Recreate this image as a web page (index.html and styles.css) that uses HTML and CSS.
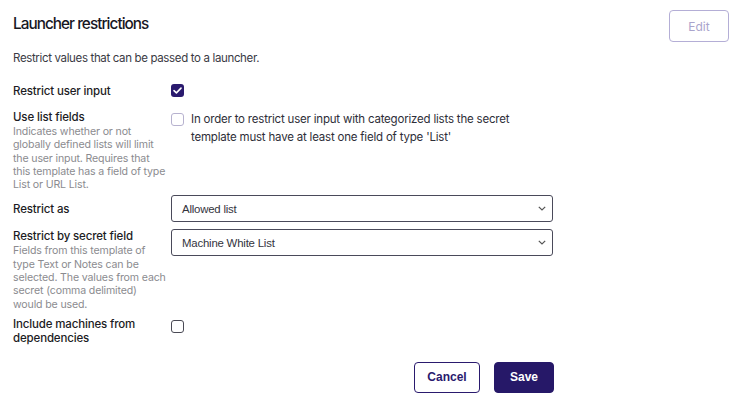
FILE: index.html
```html
<!DOCTYPE html>
<html lang="en">
<head>
<meta charset="utf-8">
<title>Launcher restrictions</title>
<link rel="stylesheet" href="styles.css">
</head>
<body>
<div class="page">
  <div class="header">
    <h1 class="title">Launcher restrictions</h1>
    <button class="btn btn-edit" type="button">Edit</button>
  </div>
  <p class="desc">Restrict values that can be passed to a launcher.</p>

  <div class="form">
    <div class="row row-user">
      <div class="label-col"><div class="label">Restrict user input</div></div>
      <div class="control-col">
        <span class="cb cb-checked">
          <svg viewBox="0 0 14 14" width="13" height="13"><path d="M3.2 7.2 L5.8 9.6 L10.8 4.4" fill="none" stroke="#fff" stroke-width="1.7" stroke-linecap="round" stroke-linejoin="round"/></svg>
        </span>
      </div>
    </div>

    <div class="row row-list">
      <div class="label-col">
        <div class="label">Use list fields</div>
        <div class="help">Indicates whether or not<br>globally defined lists will limit<br>the user input. Requires that<br>this template has a field of type<br>List or URL List.</div>
      </div>
      <div class="control-col inline">
        <span class="cb cb-disabled"></span>
        <span class="note">In order to restrict user input with categorized lists the secret template must have at least one field of type 'List'</span>
      </div>
    </div>

    <div class="row row-as">
      <div class="label-col"><div class="label">Restrict as</div></div>
      <div class="control-col">
        <div class="select"><span>Allowed list</span><svg class="chev" viewBox="0 0 8 5" width="8" height="5"><path d="M0.8 0.8 L4 4 L7.2 0.8" fill="none" stroke="#555" stroke-width="1.2"/></svg></div>
      </div>
    </div>

    <div class="row row-field">
      <div class="label-col">
        <div class="label">Restrict by secret field</div>
        <div class="help">Fields from this template of<br>type Text or Notes can be<br>selected. The values from each<br>secret (comma delimited)<br>would be used.</div>
      </div>
      <div class="control-col">
        <div class="select"><span>Machine White List</span><svg class="chev" viewBox="0 0 8 5" width="8" height="5"><path d="M0.8 0.8 L4 4 L7.2 0.8" fill="none" stroke="#555" stroke-width="1.2"/></svg></div>
      </div>
    </div>

    <div class="row row-deps">
      <div class="label-col"><div class="label label-wrap">Include machines from dependencies</div></div>
      <div class="control-col">
        <span class="cb cb-empty"></span>
      </div>
    </div>

    <div class="footer">
      <button class="btn btn-cancel" type="button">Cancel</button>
      <button class="btn btn-save" type="button">Save</button>
    </div>
  </div>
</div>
</body>
</html>
```
FILE: styles.css
```css
* { box-sizing: border-box; }
html, body { margin: 0; padding: 0; background: #fff; }
body {
  font-family: Inter, "Noto Sans", "DejaVu Sans", sans-serif;
  color: #2a2a33;
  width: 741px;
  height: 403px;
  overflow: hidden;
}
.page { padding: 10px 12px 0 13px; }

.header {
  display: flex;
  justify-content: space-between;
  align-items: flex-start;
  height: 32px;
}
.title {
  margin: 0;
  padding-top: 4px;
  font-size: 15.3px;
  font-weight: 500;
  color: #17171f;
  line-height: 20px;
  letter-spacing: -0.95px;
}
.btn {
  font-family: "Liberation Sans", Arial, sans-serif;
  border-radius: 4px;
  height: 31px;
  cursor: pointer;
}
.btn-edit {
  width: 60px;
  height: 32px;
  background: #fff;
  border: 1px solid #b4aed6;
  color: #aaa4cc;
  font-family: Inter, sans-serif;
  font-size: 12px;
  padding: 0;
}
.desc {
  margin: 8px 0 0 0;
  font-size: 11.5px;
  line-height: 16px;
  color: #3a3a44;
  letter-spacing: -0.35px;
}

.form { width: 541px; margin-top: 16px; }
.row {
  display: grid;
  grid-template-columns: 158px 1fr;
}
.label {
  font-size: 11.5px;
  font-weight: 500;
  color: #1c1c24;
  line-height: 14px;
  letter-spacing: -0.15px;
}
.help {
  font-size: 10.6px;
  line-height: 13.3px;
  color: #8b8b8f;
  letter-spacing: -0.15px;
  white-space: nowrap;
}
.control-col { display: flex; align-items: flex-start; }

.cb {
  display: inline-flex;
  align-items: center;
  justify-content: center;
  width: 13px;
  height: 13px;
  border-radius: 3px;
  flex: none;
}
.cb-checked { background: #2a1a6e; }
.cb-disabled { border: 1px solid #b7b2cf; }
.cb-empty { border: 1px solid #4a4a55; }

.row-user { height: 18px; }
.row-user .label { line-height: 18px; }
.row-user .cb { margin-top: 2px; }

.row-list { margin-top: 10px; }
.row-list .label { line-height: 15px; }
.inline { gap: 7px; padding-top: 3px; }
.note {
  max-width: 330px;
  font-size: 11.5px;
  line-height: 17.5px;
  color: #2e2e38;
  margin-top: -2px;
  letter-spacing: -0.2px;
}

.row-as { margin-top: 4px; align-items: center; }
.select {
  width: 382px;
  height: 27px;
  border: 1px solid #4a4a5a;
  border-radius: 3px;
  display: flex;
  align-items: center;
  justify-content: space-between;
  padding: 0 6px 0 10px;
  font-family: "Liberation Sans", Arial, sans-serif;
  font-size: 11.4px;
  color: #33333d;
  letter-spacing: -0.2px;
}
.chev { flex: none; }

.row-field { margin-top: 7px; }
.row-field .label { line-height: 15px; }

.row-deps { margin-top: 6px; }
.label-wrap { line-height: 14.5px; width: 140px; }
.row-deps .cb { margin-top: 3px; }

.footer {
  display: flex;
  justify-content: flex-end;
  gap: 14px;
  margin-top: 16px;
}
.btn-cancel {
  width: 66px;
  background: #fff;
  border: 1px solid #2a1a6e;
  color: #2a1a6e;
  font-size: 12px;
  font-weight: 700;
}
.btn-save {
  width: 60px;
  background: #261868;
  border: 1px solid #261868;
  color: #fff;
  font-size: 12px;
  font-weight: 700;
}
```
